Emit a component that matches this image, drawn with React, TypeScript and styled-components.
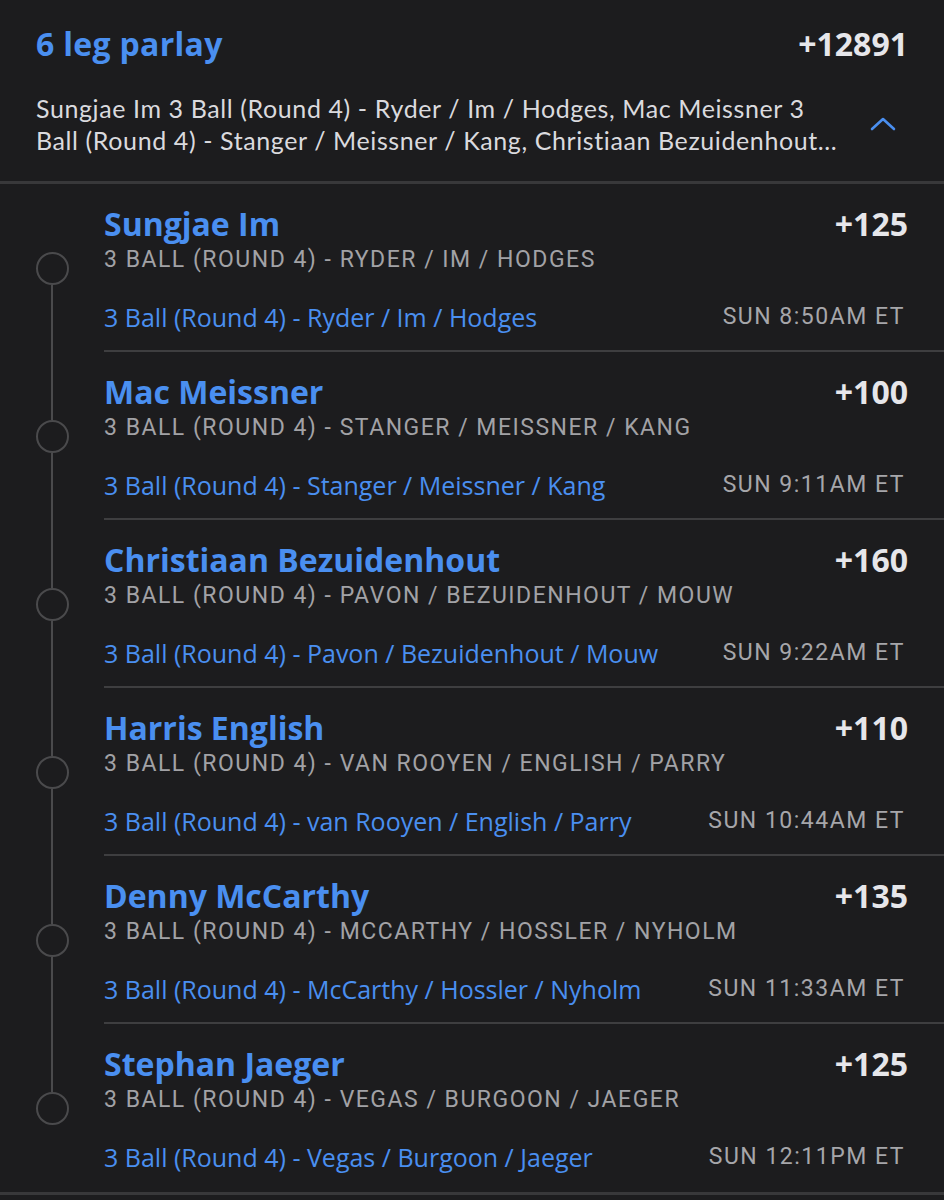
import React from 'react';
import styled, { createGlobalStyle } from 'styled-components';

const GlobalStyle = createGlobalStyle`
  html, body {
    margin: 0;
    padding: 0;
    background: #1c1c1e;
  }
  body {
    font-family: "Open Sans", Lato, sans-serif;
    -webkit-font-smoothing: antialiased;
  }
`

const BLUE = '#4a8ff0';

const Card = styled.div`
  width: 944px;
  min-height: 1200px;
  background: #1c1c1e;
  overflow: hidden;
`

const Header = styled.div`
  padding: 23px 36px 0 36px;
  border-bottom: 3px solid #38383a;
`

const HeaderTop = styled.div`
  display: flex;
  justify-content: space-between;
  align-items: center;
  height: 40px;
`

const Title = styled.div`
  color: ${BLUE};
  font-size: 32px;
  font-weight: 700;
  letter-spacing: 0.3px;
`

const TotalOdds = styled.div`
  color: #e6e6ea;
  font-size: 32px;
  font-weight: 700;
`

const Summary = styled.div`
  display: flex;
  align-items: center;
  justify-content: space-between;
  padding: 29px 0 25px;
`

const SummaryText = styled.div`
  width: 812px;
  color: #dadade;
  font-family: Lato, "Open Sans", sans-serif;
  font-size: 25px;
  letter-spacing: 0.6px;
  line-height: 32px;
  display: -webkit-box;
  -webkit-line-clamp: 2;
  -webkit-box-orient: vertical;
  overflow: hidden;
`

const Chevron = styled.svg`
  width: 30px;
  height: 20px;
  margin-right: 10px;
`

const Leg = styled.div`
  display: grid;
  grid-template-columns: 104px 1fr;
`

const Rail = styled.div`
  display: flex;
  flex-direction: column;
  align-items: center;
  width: 104px;
`

const Segment = styled.div<{ $hidden?: boolean }>`
  flex: 1;
  width: 2px;
  background: ${p => (p.$hidden ? 'transparent' : '#4a4a4c')};
`

const Dot = styled.div`
  width: 29px;
  height: 29px;
  border: 2px solid #4a4a4c;
  border-radius: 50%;
  flex-shrink: 0;
`

const Body = styled.div<{ $last?: boolean }>`
  box-sizing: border-box;
  padding: 22px 36px 0 0;
  height: 168px;
  border-bottom: 2px solid ${p => (p.$last ? 'transparent' : '#3e3e40')};
`

const Row = styled.div`
  display: flex;
  justify-content: space-between;
  align-items: center;
`

const Name = styled.div`
  color: ${BLUE};
  font-size: 32px;
  font-weight: 700;
  line-height: 36px;
`

const Odds = styled.div`
  color: #e6e6ea;
  font-size: 32px;
  font-weight: 700;
  line-height: 36px;
`

const Market = styled.div`
  margin-top: 3px;
  color: #a2a2a6;
  font-family: Roboto, "DejaVu Sans", sans-serif;
  font-size: 23px;
  letter-spacing: 1.5px;
  line-height: 30px;
  text-transform: uppercase;
`

const LinkRow = styled(Row)`
  margin-top: 27px;
`

const EventLink = styled.div`
  color: ${BLUE};
  font-size: 25px;
  line-height: 30px;
`

const Time = styled.div`
  color: #a6a6aa;
  font-family: Roboto, "DejaVu Sans", sans-serif;
  font-size: 23px;
  letter-spacing: 1.5px;
  line-height: 30px;
  text-transform: uppercase;
  margin-right: 3px;
`

const Footer = styled.div`
  border-top: 3px solid #38383a;
`

type LegData = {
  player: string;
  odds: string;
  players: string;
  time: string;
};

const legs: LegData[] = [
  { player: 'Sungjae Im', odds: '+125', players: 'Ryder / Im / Hodges', time: 'Sun 8:50AM ET' },
  { player: 'Mac Meissner', odds: '+100', players: 'Stanger / Meissner / Kang', time: 'Sun 9:11AM ET' },
  { player: 'Christiaan Bezuidenhout', odds: '+160', players: 'Pavon / Bezuidenhout / Mouw', time: 'Sun 9:22AM ET' },
  { player: 'Harris English', odds: '+110', players: 'van Rooyen / English / Parry', time: 'Sun 10:44AM ET' },
  { player: 'Denny McCarthy', odds: '+135', players: 'McCarthy / Hossler / Nyholm', time: 'Sun 11:33AM ET' },
  { player: 'Stephan Jaeger', odds: '+125', players: 'Vegas / Burgoon / Jaeger', time: 'Sun 12:11PM ET' },
];

const summary =
  'Sungjae Im 3 Ball (Round 4) - Ryder / Im / Hodges, Mac Meissner 3 Ball (Round 4) - Stanger / Meissner / Kang, Christiaan Bezuidenhout...';

const App: React.FC = () => {
  return (
    <>
      <GlobalStyle />
      <Card>
        <Header>
          <HeaderTop>
            <Title>6 leg parlay</Title>
            <TotalOdds>+12891</TotalOdds>
          </HeaderTop>
          <Summary>
            <SummaryText>{summary}</SummaryText>
            <Chevron viewBox="0 0 30 20" fill="none">
              <path d="M4 15 L15 5 L26 15" stroke={BLUE} strokeWidth="2.6" strokeLinecap="round" strokeLinejoin="round" />
            </Chevron>
          </Summary>
        </Header>
        {legs.map((leg, i) => (
          <Leg key={leg.player}>
            <Rail>
              <Segment $hidden={i === 0} />
              <Dot />
              <Segment $hidden={i === legs.length - 1} />
            </Rail>
            <Body $last={i === legs.length - 1}>
              <Row>
                <Name>{leg.player}</Name>
                <Odds>{leg.odds}</Odds>
              </Row>
              <Market>3 Ball (Round 4) - {leg.players}</Market>
              <LinkRow>
                <EventLink>3 Ball (Round 4) - {leg.players}</EventLink>
                <Time>{leg.time}</Time>
              </LinkRow>
            </Body>
          </Leg>
        ))}
        <Footer />
      </Card>
    </>
  );
};

export default App
